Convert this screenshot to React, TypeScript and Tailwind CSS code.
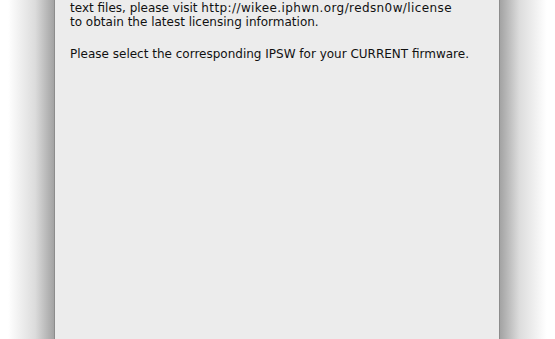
import React from "react";

const App = () => {
  return (
    <div className="flex h-[339px] w-[555px] overflow-hidden bg-white">
      <div className="w-[54px] shrink-0 bg-gradient-to-r from-white from-[15%] via-[#dcdcdc] via-[65%] to-[#a3a3a3]" />
      <div className="w-[446px] shrink-0 border-x border-[#8c8c8c] bg-[#ececec] pl-[15px] pt-[1px] font-['DejaVu_Sans',sans-serif] text-[12px] leading-[14px] text-[#111]">
        <p>
          text files, please visit <span className="tracking-[0.4px]">http://wikee.iphwn.org/redsn0w/license</span>
          <br />
          to obtain the latest licensing information.
        </p>
        <p className="mt-[18px]">Please select the corresponding IPSW for your CURRENT firmware.</p>
      </div>
      <div className="flex-1 bg-gradient-to-l from-white from-[15%] via-[#dcdcdc] via-[65%] to-[#a3a3a3]" />
    </div>
  );
};

export default App;
